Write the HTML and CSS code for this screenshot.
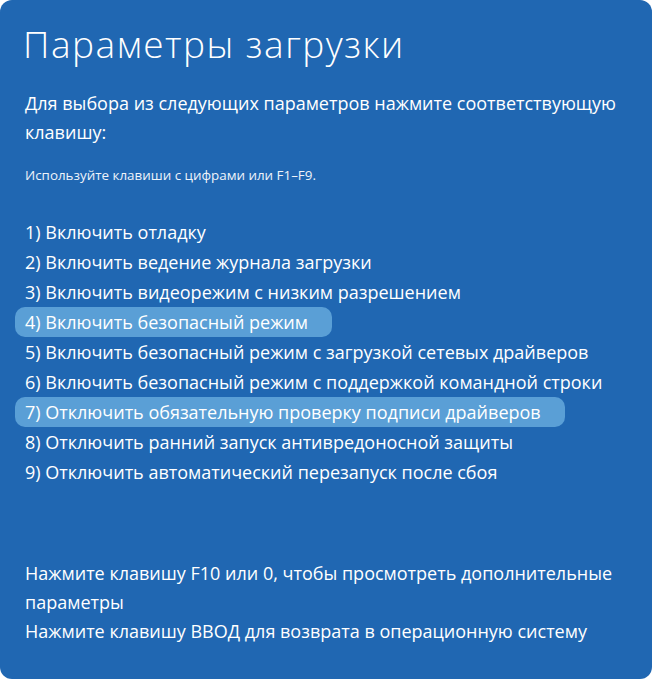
FILE: index.html
```html
<!DOCTYPE html>
<html lang="ru">
<head>
    <meta charset="UTF-8">
    <meta name="viewport" content="width=device-width, initial-scale=1.0">
    <title>Параметры загрузки</title>
    <link rel="stylesheet" href="styles.css">
</head>
<body>
    <div class="screen">
        <h1 class="title">Параметры загрузки</h1>
        <p class="intro">Для выбора из следующих параметров нажмите соответствующую клавишу:</p>
        <p class="hint">Используйте клавиши с цифрами или F1–F9.</p>

        <ul class="options">
            <li class="option">1) Включить отладку</li>
            <li class="option">2) Включить ведение журнала загрузки</li>
            <li class="option">3) Включить видеорежим с низким разрешением</li>
            <li class="option selected">4) Включить безопасный режим</li>
            <li class="option">5) Включить безопасный режим с загрузкой сетевых драйверов</li>
            <li class="option">6) Включить безопасный режим с поддержкой командной строки</li>
            <li class="option selected">7) Отключить обязательную проверку подписи драйверов</li>
            <li class="option">8) Отключить ранний запуск антивредоносной защиты</li>
            <li class="option">9) Отключить автоматический перезапуск после сбоя</li>
        </ul>

        <div class="footer">
            <p>Нажмите клавишу F10 или 0, чтобы просмотреть дополнительные параметры</p>
            <p>Нажмите клавишу ВВОД для возврата в операционную систему</p>
        </div>
    </div>
</body>
</html>
```

FILE: styles.css
```css
body {
    margin: 0;
    padding: 0;
    background: #fff;
    font-family: 'Open Sans', 'Noto Sans', sans-serif;
}

.screen {
    box-sizing: border-box;
    width: 652px;
    height: 679px;
    padding: 21px 25px 0 25px;
    background-color: #2067b2;
    border-radius: 12px;
    color: #fff;
}

.title {
    margin: 0 0 0 -2px;
    font-size: 37px;
    font-weight: 300;
    letter-spacing: 1.5px;
    line-height: 46px;
}

.intro {
    margin: 22px 0 0 0;
    font-size: 18px;
    line-height: 29px;
}

.hint {
    margin: 18px 0 0 0;
    font-size: 13.4px;
    line-height: 20px;
    color: #eef3fa;
}

.options {
    list-style: none;
    margin: 32px 0 0 -10px;
    padding: 0;
    display: flex;
    flex-direction: column;
    align-items: flex-start;
}

.option {
    height: 30px;
    line-height: 30px;
    font-size: 18px;
    padding: 0 24px 0 10px;
    border-radius: 10px;
}

.option.selected {
    background-color: #5a9fd6;
}

.footer {
    margin-top: 72px;
}

.footer p {
    margin: 0;
    font-size: 18px;
    line-height: 29px;
}
```
